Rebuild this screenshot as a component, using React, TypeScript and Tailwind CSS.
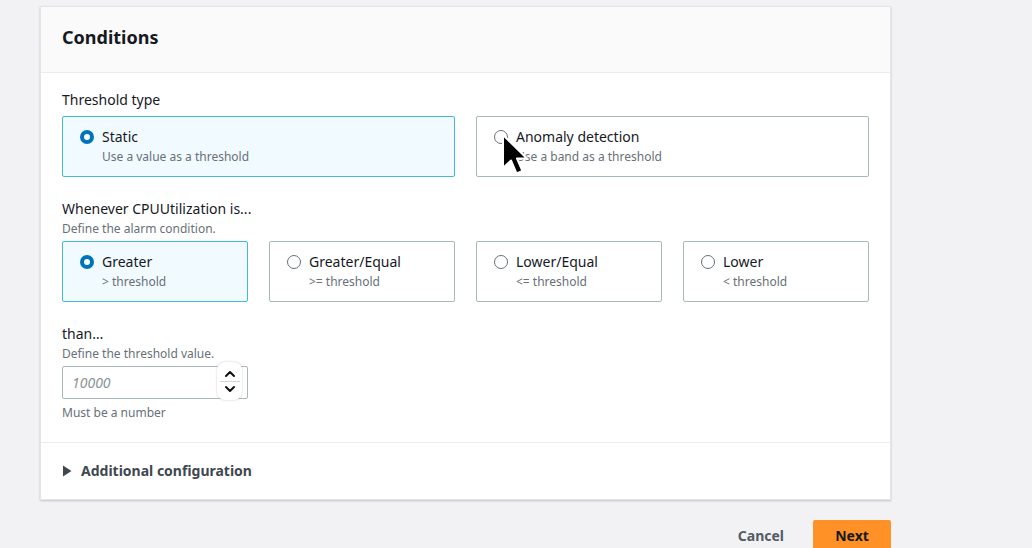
import React from 'react';

const font = { fontFamily: '"Noto Sans", "Open Sans", Arial, sans-serif' };

type TileProps = {
  title: string;
  desc: string;
  selected?: boolean;
  children?: React.ReactNode;
};

const Radio = ({ selected }: { selected?: boolean }) =>
  selected ? (
    <span className="mt-[3px] block h-[14px] w-[14px] shrink-0 rounded-full border-[4px] border-[#0073bb] bg-white" />
  ) : (
    <span className="mt-[3px] block h-[14px] w-[14px] shrink-0 rounded-full border-[1.5px] border-[#687078] bg-white" />
  );

const Tile = ({ title, desc, selected, children }: TileProps) => (
  <div
    className={`relative flex h-[61px] gap-[8px] rounded-[2px] border px-[17px] pt-[10px] ${
      selected ? 'border-[#44b9d6] bg-[#f1faff]' : 'border-[#aab7b8] bg-white'
    }`}
  >
    <Radio selected={selected} />
    <div className="flex flex-col">
      <span className="text-[14px] leading-[20px] text-[#16191f]">{title}</span>
      <span className="mt-[1px] text-[12px] leading-[18px] text-[#687078]">{desc}</span>
    </div>
    {children}
  </div>
);

// mouse pointer captured in the screenshot
const Cursor = () => (
  <svg className="absolute left-[24px] top-[16px]" width="30" height="46" viewBox="0 0 30 46">
    <path
      d="M2 2 L2 35 L10 27.5 L15.5 40.5 L21.5 38 L16 25.5 L26 25.5 Z"
      fill="#000"
      stroke="#fff"
      strokeWidth="2"
      strokeLinejoin="round"
    />
  </svg>
);

const App: React.FC = () => {
  return (
    <div className="h-[548px] w-full overflow-hidden bg-[#f2f2f4] pl-[40px] pt-[6px]" style={font}>
      <div className="w-[851px] border border-[#e3e5e7] bg-white shadow-[0_1px_2px_rgba(0,0,0,0.2)]">
        {/* Header */}
        <div className="flex h-[66px] items-center border-b border-[#eaeded] bg-[#fafafa] px-[21px] pb-[6px]">
          <h2 className="text-[18px] font-bold leading-[24px] text-[#16191f]">Conditions</h2>
        </div>

        {/* Body */}
        <div className="px-[21px] pt-[17px]">
          <div className="text-[14px] leading-[20px] text-[#16191f]">Threshold type</div>
          <div className="mt-[6px] grid grid-cols-2 gap-[21px]">
            <Tile title="Static" desc="Use a value as a threshold" selected />
            <Tile title="Anomaly detection" desc="Use a band as a threshold">
              <Cursor />
            </Tile>
          </div>

          <div className="mt-[22px] text-[14px] leading-[20px] text-[#16191f]">Whenever CPUUtilization is...</div>
          <div className="mt-[2px] text-[12px] leading-[16px] text-[#687078]">Define the alarm condition.</div>
          <div className="mt-[4px] grid grid-cols-4 gap-[21px]">
            <Tile title="Greater" desc="> threshold" selected />
            <Tile title="Greater/Equal" desc=">= threshold" />
            <Tile title="Lower/Equal" desc="<= threshold" />
            <Tile title="Lower" desc="< threshold" />
          </div>

          <div className="mt-[22px] text-[14px] leading-[20px] text-[#16191f]">than…</div>
          <div className="mt-[2px] text-[12px] leading-[16px] text-[#687078]">Define the threshold value.</div>
          <div className="relative mt-[4px] flex h-[33px] w-[186px] items-center rounded-[2px] border border-[#aab7b8] bg-white pl-[9px]">
            <span className="text-[14px] italic text-[#879596]">10000</span>
            <div className="absolute right-[5px] top-[-5px] flex h-[38px] w-[25px] flex-col items-center justify-center rounded-[8px] bg-white shadow-[0_0_2px_rgba(0,0,0,0.25)]">
              <svg width="12" height="8" viewBox="0 0 12 8">
                <path d="M2 6 L6 2 L10 6" fill="none" stroke="#111" strokeWidth="2" strokeLinecap="round" strokeLinejoin="round" />
              </svg>
              <div className="my-[3px] h-px w-[20px] bg-[#d5d5d5]" />
              <svg width="12" height="8" viewBox="0 0 12 8">
                <path d="M2 2 L6 6 L10 2" fill="none" stroke="#111" strokeWidth="2" strokeLinecap="round" strokeLinejoin="round" />
              </svg>
            </div>
          </div>
          <div className="mt-[6px] pb-[21px] text-[12px] leading-[16px] text-[#687078]">Must be a number</div>
        </div>

        {/* Additional configuration */}
        <div className="flex h-[57px] items-center gap-[9px] border-t border-[#eaeded] px-[21px] pb-[1px]">
          <svg width="10" height="12" viewBox="0 0 10 12">
            <path d="M1 0.5 L9.5 6 L1 11.5 Z" fill="#414750" />
          </svg>
          <span className="text-[14px] font-bold text-[#414750]">Additional configuration</span>
        </div>
      </div>

      {/* Footer actions */}
      <div className="mt-[20px] flex w-[851px] items-start justify-end gap-[29px]">
        <span className="mt-[7px] text-[14px] font-bold leading-[18px] text-[#545b64]">Cancel</span>
        <div className="flex h-[36px] w-[78px] justify-center rounded-[2px] bg-[#ff9126] pt-[7px] text-[14px] font-bold leading-[18px] text-[#16191f]">
          Next
        </div>
      </div>
    </div>
  );
};

export default App;
